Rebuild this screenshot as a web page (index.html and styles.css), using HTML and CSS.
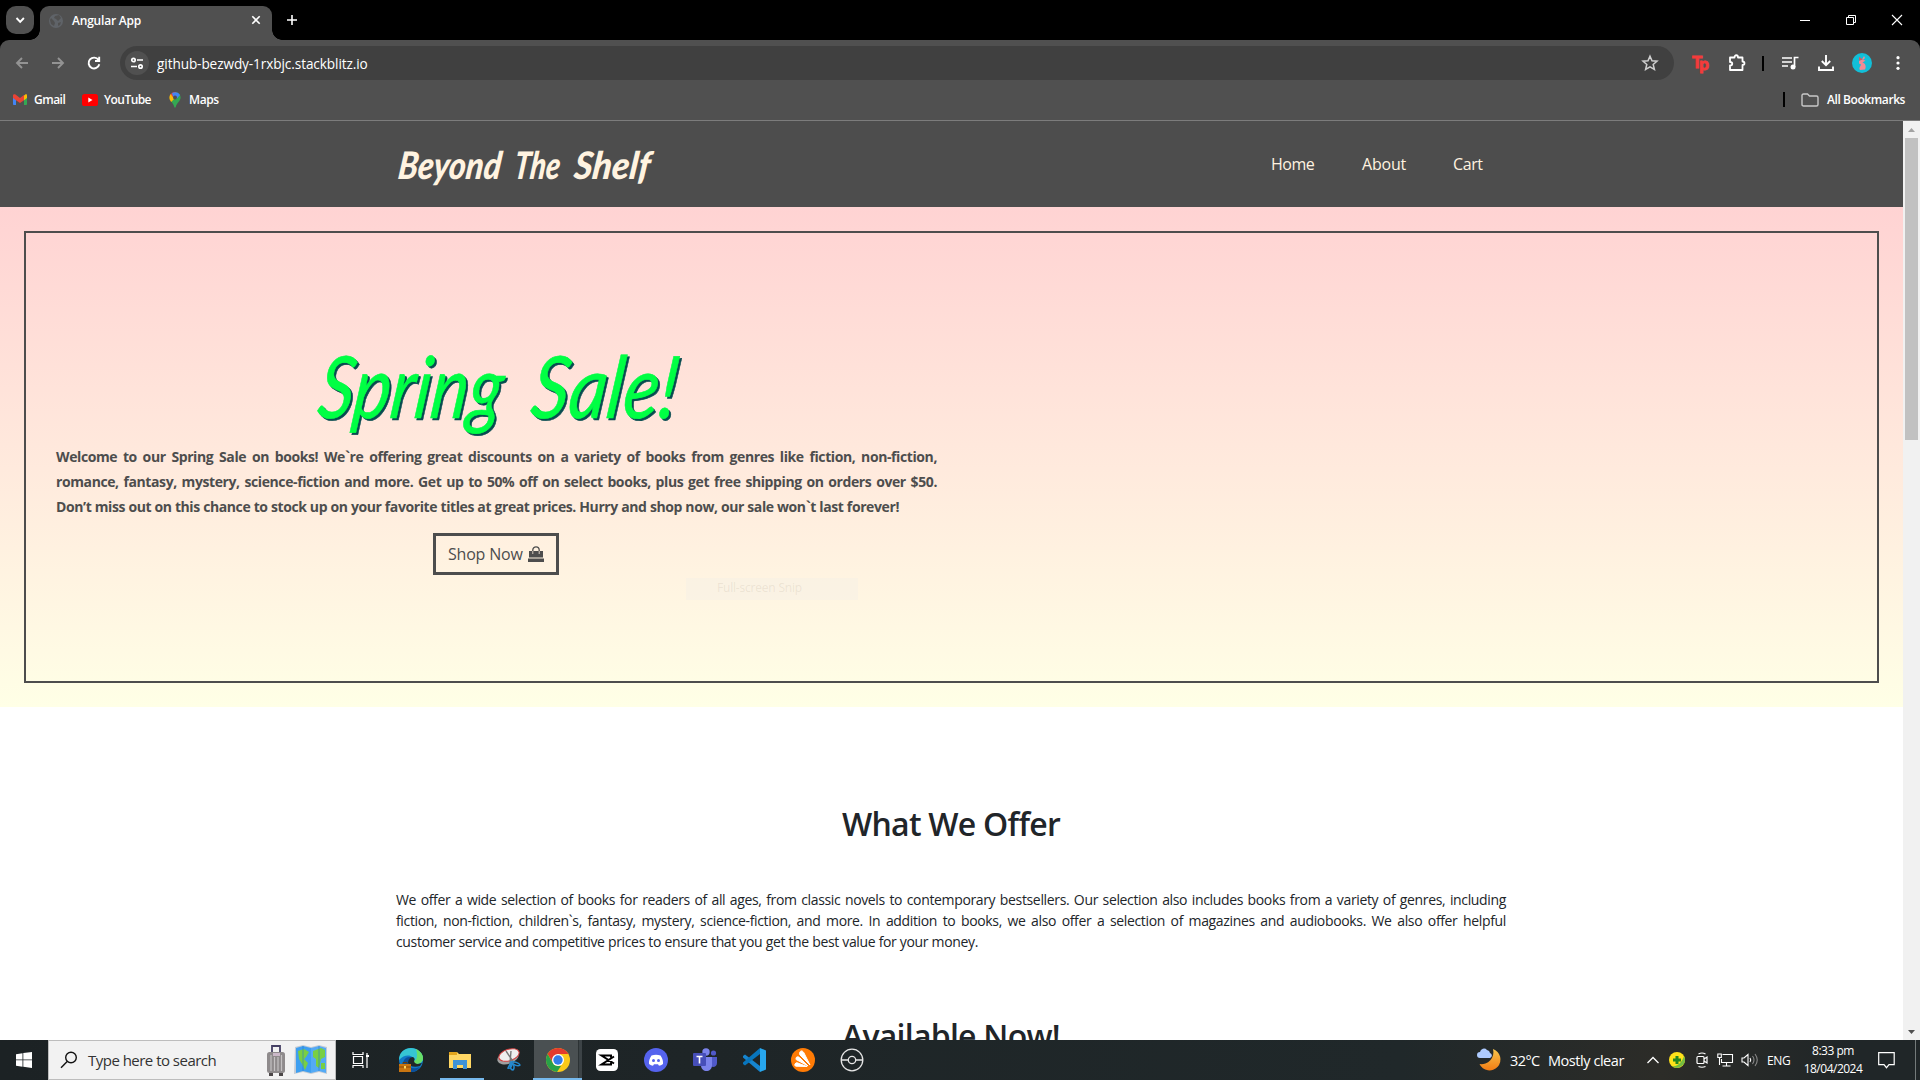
FILE: index.html
```html
<!DOCTYPE html>
<html lang="en">
<head>
<meta charset="utf-8">
<title>Angular App</title>
<link rel="stylesheet" href="styles.css">
</head>
<body>
<div class="screen">
  <header class="tabstrip">
    <div class="tabsearch"><svg width="28" height="28" viewBox="0 0 28 28"><path d="M10.500 12l3.700 3.800 3.700-3.800" fill="none" stroke="#fff" stroke-width="1.900"/></svg></div>
    <div class="tab">
      <svg width="16" height="16" viewBox="0 0 16 16"><circle cx="8" cy="8" r="7" fill="#5f6368"/><path d="M3 5l3 3 1 2-1 3-3-2-1-4zM7 3l4-1 2 3-3 3-2-2-2-1zM10 10l3-1-1 3-2 1z" fill="#505050"/></svg>
      <span class="tab-title">Angular App</span>
      <svg class="tab-close" width="16" height="16" viewBox="0 0 16 16"><path d="M4.300 4.300l7.400 7.400M11.700 4.300l-7.400 7.400" stroke="#fff" stroke-width="1.600"/></svg>
    </div>
    <svg class="newtab" width="16" height="16" viewBox="0 0 16 16"><path d="M8 3v10M3 8h10" stroke="#fff" stroke-width="1.600"/></svg>
    <div class="winctl">
      <svg width="46" height="40" viewBox="0 0 46 40"><path d="M18 20.500h10" stroke="#fff"/></svg>
      <svg width="46" height="40" viewBox="0 0 46 40"><path d="M18.500 17.500h7v7h-7zM20.500 17v-1.500h7v7h-2" fill="none" stroke="#fff"/></svg>
      <svg width="46" height="40" viewBox="0 0 46 40"><path d="M18 15l10 10M28 15l-10 10" stroke="#fff" stroke-width="1.100"/></svg>
    </div>
  </header>

  <div class="toolbar-back">
  <div class="toolbar">
    <svg class="nav-icon dim" viewBox="0 0 16 16"><path d="M14 8H3M8 3L3 8l5 5"/></svg>
    <svg class="nav-icon dim" viewBox="0 0 16 16"><path d="M2 8h11M8 3l5 5-5 5"/></svg>
    <svg class="nav-icon" viewBox="0 0 16 16"><path d="M12.500 5A5.400 5.400 0 1 0 13.300 9.300M13.200 1.800V6H9"/></svg>
    <div class="omnibox">
      <div class="siteinfo"><svg width="14" height="14" viewBox="0 0 14 14" fill="none" stroke="#fff" stroke-width="1.700"><circle cx="3.500" cy="4" r="1.700"/><path d="M7 4h6M1 10.500h6"/><circle cx="10.500" cy="10.500" r="1.700"/></svg></div>
      <span class="url">github-bezwdy-1rxbjc.stackblitz.io</span>
      <svg class="star" width="18" height="18" viewBox="0 0 18 18"><path d="M9 2.200l2 4.600 5 .4-3.800 3.300 1.200 4.900L9 12.800l-4.400 2.600 1.200-4.900L2 7.200l5-.4z" fill="none" stroke="#d0d0d0" stroke-width="1.500"/></svg>
    </div>
    <div class="actions">
      <span class="tp"><b>T</b><b>p</b></span>
      <svg width="20" height="20" viewBox="0 0 20 20"><path d="M3 4.500h4.500c0-3 3.500-3 3.500 0h4.500v4c2.600 0 2.600 3.500 0 3.500v5H3v-4.500c3 0 3-3.500 0-3.500z" fill="none" stroke="#fff" stroke-width="1.800" stroke-linejoin="round"/></svg>
      <i class="sep"></i>
      <svg width="18" height="18" viewBox="0 0 18 18"><path d="M1 4h10M1 8h10M1 12h6M13.500 13V3.500h4" fill="none" stroke="#fff" stroke-width="1.700"/><circle cx="12" cy="13" r="2.500" fill="#fff"/></svg>
      <svg width="18" height="18" viewBox="0 0 18 18"><path d="M9 1v10M4.800 7L9 11.200 13.200 7M2 12.500V16h14v-3.500" fill="none" stroke="#fff" stroke-width="1.900"/></svg>
      <svg width="20" height="20" viewBox="0 0 20 20"><circle cx="10" cy="10" r="10" fill="#12bfd8"/><path d="M7 8l3-1.500L12 3l1 2-2 2 2.500.5-3 2c3 1 4 4 2.500 7l-5 .5c-1.500-2 .5-3.500 1-5.500l-2-1z" fill="#f28b94"/><path d="M7 4l4 2.500-4 1z" fill="#d95760"/></svg>
      <svg width="16" height="16" viewBox="0 0 16 16" fill="#fff"><circle cx="8" cy="2.700" r="1.600"/><circle cx="8" cy="8" r="1.600"/><circle cx="8" cy="13.300" r="1.600"/></svg>
    </div>
  </div>
  </div>

  <div class="bookmarks">
    <svg width="14" height="11" viewBox="0 0 14 11"><path d="M0 2v8.200c0 .5.300.8.800.8H3V4z" fill="#4285f4"/><path d="M14 2v8.200c0 .5-.3.800-.8.800H11V4z" fill="#34a853"/><path d="M11 1.500L13 0c.6.300 1 .8 1 1.500V4l-3 2.300z" fill="#fbbc04"/><path d="M0 4V1.500C0 .3 1.500-.2 2.500.6L7 4l4-3v5.300L7 9 3 6.300z" fill="#ea4335"/></svg>
    <span class="bm bm-gmail">Gmail</span>
    <svg width="16" height="12" viewBox="0 0 16 12"><rect width="16" height="12" rx="2.600" fill="#f00"/><path d="M6.300 3.500v5L10.500 6z" fill="#fff"/></svg>
    <span class="bm bm-yt">YouTube</span>
    <svg width="12" height="16" viewBox="0 0 12 16"><path d="M6 0a5.600 5.600 0 0 1 5.600 5.600C11.600 9 7.800 11 6.700 15c-.2 1-1.200 1-1.400 0C4.800 12.700 3.500 11 2.200 9.500z" fill="#34a853"/><path d="M2 1.700L6 6l-3.800 4C1 8.500.4 7.200.4 5.600.4 4 1 2.700 2 1.700z" fill="#fbbc04"/><path d="M1.800 2A5.600 5.600 0 0 1 7.500.2L3.500 5z" fill="#ea4335"/><path d="M3 1C5 0 9-.5 11 3L7.500 7 4 4.500z" fill="#4285f4"/><circle cx="6" cy="5.600" r="2" fill="#505050"/></svg>
    <span class="bm bm-maps">Maps</span>
    <i class="sep"></i>
    <svg class="folder" width="18" height="14" viewBox="0 0 18 14"><path d="M1 2.500C1 1.500 1.500 1 2.500 1h4l2 2h7c1 0 1.500.5 1.500 1.500v7c0 1-.5 1.500-1.500 1.500h-13C1.500 13 1 12.500 1 11.500z" fill="none" stroke="#c7c7c7" stroke-width="1.400"/></svg>
    <span class="bm bm-all">All Bookmarks</span>
  </div>

  <div class="viewport">
    <main class="page">
      <nav class="navbar">
        <svg class="brand" width="270" height="86">
          <g transform="translate(0 58) skewX(-7)">
            <text x="5" y="0" textLength="103" lengthAdjust="spacingAndGlyphs">Beyond</text>
            <text x="121" y="0" textLength="46" lengthAdjust="spacingAndGlyphs">The</text>
            <text x="181" y="0" textLength="76" lengthAdjust="spacingAndGlyphs">Shelf</text>
          </g>
        </svg>
        <a class="link home">Home</a><a class="link about">About</a><a class="link cart">Cart</a>
      </nav>
      <section class="hero">
        <div class="frame">
          <div class="promo">
            <svg class="sale" width="390" height="104">
              <g class="shade" transform="translate(2 80) skewX(-7)">
                <text x="10" y="0" textLength="184" lengthAdjust="spacingAndGlyphs">Spring</text>
                <text x="223" y="0" textLength="146" lengthAdjust="spacingAndGlyphs">Sale!</text>
              </g>
              <g transform="translate(0 78) skewX(-7)">
                <text x="10" y="0" textLength="184" lengthAdjust="spacingAndGlyphs">Spring</text>
                <text x="223" y="0" textLength="146" lengthAdjust="spacingAndGlyphs">Sale!</text>
              </g>
            </svg>
            <div class="lead">
              <p>Welcome to our Spring Sale on books! We`re offering great discounts on a variety of books from genres like fiction, non-fiction,</p>
              <p>romance, fantasy, mystery, science-fiction and more. Get up to 50% off on select books, plus get free shipping on orders over $50.</p>
              <p class="lead-last">Don’t miss out on this chance to stock up on your favorite titles at great prices. Hurry and shop now, our sale won`t last forever!</p>
            </div>
            <a class="shop"><span>Shop Now</span><svg width="16" height="16" viewBox="0 0 16 16"><path d="M1 5h14v6.500H1zM0 12.500h16V16H0z" fill="#4d4d4d"/><path d="M4.800 7V4a3.200 3.200 0 0 1 6.400 0v3" fill="none" stroke="#4d4d4d" stroke-width="1.300"/><path d="M4.800 5v3M11.200 5v3" stroke="#ffefe0" stroke-width=".8"/></svg></a>
          </div>
          <div class="snip">Full-screen Snip</div>
        </div>
      </section>
      <section class="offer">
        <h2 class="h-offer">What We Offer</h2>
        <div class="copy">
          <p>We offer a wide selection of books for readers of all ages, from classic novels to contemporary bestsellers. Our selection also includes books from a variety of genres, including</p>
          <p>fiction, non-fiction, children`s, fantasy, mystery, science-fiction, and more. In addition to books, we also offer a selection of magazines and audiobooks. We also offer helpful</p>
          <p class="copy-last">customer service and competitive prices to ensure that you get the best value for your money.</p>
        </div>
        <h2 class="h-avail">Available Now!</h2>
      </section>
    </main>
    <div class="scrollbar">
      <svg width="17" height="17" viewBox="0 0 17 17"><path d="M5 11h7L8.500 7z" fill="#a3a3a3"/></svg>
      <i class="thumb"></i>
      <svg width="17" height="17" viewBox="0 0 17 17"><path d="M5 7h7l-3.500 4z" fill="#505050"/></svg>
    </div>
  </div>

  <footer class="taskbar">
    <div class="start"><svg width="16" height="16" viewBox="0 0 16 16" fill="#fff"><path d="M0 2.200l6.500-1v6.300H0zM7.300 1.100L16 0v7.500H7.300zM0 8.300h6.500v6.400L0 13.800zM7.300 8.300H16V16l-8.700-1.200z"/></svg></div>
    <div class="search">
      <svg width="18" height="18" viewBox="0 0 18 18" fill="none" stroke="#111" stroke-width="1.400"><circle cx="11" cy="6.500" r="5.300"/><path d="M7.200 10.400L1 16.800"/></svg>
      <span>Type here to search</span>
      <svg class="case" width="18" height="32" viewBox="0 0 18 32"><path d="M5 9V2h8v7" fill="none" stroke="#454064" stroke-width="1.800"/><rect x="0" y="8" width="18" height="21" rx="2.500" fill="#8f8b8c"/><path d="M4 11v16M7.500 13v14M11 13v14M14.500 11v16" stroke="#c4c1c2" stroke-width="1.200"/><path d="M6 9h7v3H6z" fill="#cbb8c8"/><path d="M2 29h4v3H2zM12 29h4v3h-4z" fill="#4c4748"/></svg>
      <svg class="map" width="34" height="30" viewBox="0 0 34 30"><path d="M1 2l8-2 8 2 8-2 8 2v27l-8-2-8 2-8-2-9 2z" fill="#c3cbd5"/><path d="M2 3l7-2 8 2v25l-8-2-7 2z" fill="#3e9ff0"/><path d="M17 3l8-2 7 2v25l-7-2-8 2z" fill="#54aaf5"/><path d="M4 6l6-2 5 3-3 5-2 2 4 4-3 7-3-6-3-5zM19 6l8-3 4 2v7l-4 2-2 9-3-2v-7l-3-2zM27 18h4v6h-4z" fill="#79cf43"/><path d="M9 1v25M25 1v25" stroke="#287dcd" opacity=".6"/></svg>
    </div>
    <div class="apps">
      <div class="app"><svg width="18" height="18" viewBox="0 0 18 18" fill="none" stroke="#fff" stroke-width="1.200"><path d="M1 1v2.500h10V1M1 17v-2.500h10V17M1.500 5.500h9v7h-9zM15 2v2M15 6v11"/><path d="M14 5h3" stroke-width="2"/></svg></div>
      <div class="app edge"><svg width="24" height="24" viewBox="0 0 24 24"><circle cx="12" cy="12" r="12" fill="#1079c7"/><path d="M0 12C0 4 6 0 12 0s12 5 12 10c0 4-3 6-7 6-2 0-4-1-2-3C16 8 7 4 0 12z" fill="#36c6d3"/><path d="M17 1c4 2 7 5 7 9 0 4-3 6-7 6-2 0-4-1-2-3 3 0 4-6 2-12z" fill="#68df67"/><path d="M9 17c0-4 1-6 4-7-4-3-9 1-9 6s3 8 8 8c4 0 7-2 9-5-5 2-11 2-12-2z" fill="#0b4f9b"/><path d="M15 13c1-1 1-3-1-4-3 0-5 3-5 6 1 3 6 5 12 3l2-3c-3 1-7 2-8-2z" fill="#20282a"/><rect x="0" y="16" width="12" height="8" fill="#c87511"/><path d="M4 16v-1.500h4V16" fill="none" stroke="#6b3e06"/><path d="M0 19h12" stroke="#8c4b05"/><rect x="5" y="18" width="2" height="2.500" fill="#ffd45c"/></svg></div>
      <div class="app open"><svg width="22" height="20" viewBox="0 0 22 20"><path d="M0 2h8l2 2h12v14H0z" fill="#ffd764"/><path d="M0 2h8v3H0z" fill="#e3a51c"/><path d="M4 19v-9h14v9h-4v-4H8v4z" fill="#3f92d7"/></svg></div>
      <div class="app"><svg width="24" height="24" viewBox="0 0 24 24"><ellipse cx="11" cy="9.500" rx="11" ry="6.300" transform="rotate(-18 11 9.500)" fill="#a0a0a0"/><ellipse cx="12" cy="7" rx="10.500" ry="5.700" transform="rotate(-18 12 7)" fill="#eee" stroke="#d33f3f"/><path d="M9 3l8 12M14 3l-1 12" stroke="#777" stroke-width="1.400"/><path d="M14 14l-3 6c3 1 5-3 3-6 3-1 8 1 9 3-2 2-6 0-9-3 3 2 4 6 2 8-3 0-3-5-2-8" fill="none" stroke="#2389cf" stroke-width="1.500"/></svg></div>
      <div class="app active"><svg width="24" height="24" viewBox="0 0 24 24"><circle cx="12" cy="12" r="12" fill="#fbc91a"/><path d="M1.600 6A12 12 0 0 1 22.400 6H12l-5 9z" fill="#e33b2e"/><path d="M1.600 6l5.200 9A6 6 0 0 0 12 18h3l-4 6A12 12 0 0 1 1.600 6z" fill="#28a148"/><circle cx="12" cy="12" r="6" fill="#fff"/><circle cx="12" cy="12" r="4.700" fill="#327de8"/></svg></div>
      <div class="app"><svg width="22" height="22" viewBox="0 0 22 22"><rect width="22" height="22" rx="4.500" fill="#fff"/><path d="M18 7.500L5.500 15.500H15V13.500M18 14.500L5.500 6.500H15V8.500" fill="none" stroke="#000" stroke-width="2"/></svg></div>
      <div class="app"><svg width="24" height="24" viewBox="0 0 24 24"><circle cx="12" cy="12" r="12" fill="#5563ee"/><path d="M7.500 7.500Q12 6 16.500 7.500 19.500 12 19 16q-2 1.700-4 1.700l-1-1.500h-4l-1 1.500q-2 0-4-1.700-.5-4 2.500-8.500z" fill="#fff"/><circle cx="9.500" cy="12.600" r="1.500" fill="#5563ee"/><circle cx="14.500" cy="12.600" r="1.500" fill="#5563ee"/></svg></div>
      <div class="app"><svg width="24" height="24" viewBox="0 0 24 24"><circle cx="13" cy="4" r="3.700" fill="#7b83eb"/><circle cx="20.500" cy="5" r="2.600" fill="#5059c9"/><path d="M17 9h7v6c0 5-7 5-7 1z" fill="#5059c9"/><path d="M8 9h11v8c0 8-11 8-11 0z" fill="#7b83eb"/><rect y="5" width="13" height="13" rx="1" fill="#464eb8"/><path d="M3.500 8.500h6M6.500 8.500v7" stroke="#fff" stroke-width="1.600"/></svg></div>
      <div class="app"><svg width="24" height="24" viewBox="0 0 24 24"><path d="M1 8l2-1.500L18 18v6L1 9.500z" fill="#1685cf"/><path d="M1 16l2 1.500L18 6V0L1 14.500z" fill="#0875bd"/><path d="M18 0l6 2.500v19L18 24z" fill="#27a7ef"/></svg></div>
      <div class="app"><svg width="24" height="24" viewBox="0 0 24 24"><circle cx="12" cy="12" r="12" fill="#ff7b05"/><path d="M9 4c1-2 3-1 4 1l6 12L9 7c-.7-1-.7-2 0-3zM5 10c1-2 3-1 4 0l8 8L6 12c-1 0-1-1-1-2zM4 16c1-2 3-1 4-.5l8 3-11-.3c-1 0-1.500-1-1-2.200z" fill="#fff" stroke="#fff"/></svg></div>
      <div class="app"><svg width="24" height="24" viewBox="0 0 24 24" fill="none" stroke="#e6e6e6" stroke-width="1.300"><circle cx="12" cy="12" r="10.800"/><circle cx="12" cy="12" r="3.700"/><path d="M1 12h7.300M15.700 12H23"/></svg></div>
    </div>
    <div class="tray">
      <svg class="moon" width="24" height="24" viewBox="0 0 24 24"><defs><linearGradient id="m" x2="0" y2="1"><stop stop-color="#f5c54d"/><stop offset="1" stop-color="#f27c13"/></linearGradient></defs><path d="M16 1a11 11 0 1 1-13.500 15A12 12 0 0 0 16 1z" fill="url(#m)"/><path d="M3 10a3 3 0 0 1 0-6 4 4 0 0 1 7-2 3.500 3.500 0 0 1 3 3 2.600 2.600 0 0 1 0 5z" fill="#aecbff"/></svg>
      <span class="temp">32°C</span><span class="sky">Mostly clear</span>
      <svg class="caret" width="12" height="8" viewBox="0 0 12 8"><path d="M.5 7L6 1.500 11.500 7" fill="none" stroke="#fff" stroke-width="1.300"/></svg>
      <svg class="plus" width="16" height="16" viewBox="0 0 16 16"><circle cx="8" cy="8" r="8" fill="#ffe21a"/><path d="M15 4a8 8 0 0 1-12 10c6 1 10-4 12-10z" fill="#75bd3f"/><path d="M8 4v8M4 8h8" stroke="#24861f" stroke-width="3"/></svg>
      <svg class="meet" width="12" height="16" viewBox="0 0 12 16" fill="none" stroke="#fff" stroke-width="1.200"><rect x="1" y="4.500" width="7" height="7" rx="1"/><path d="M8 7l3-2v6L8 9M2.500 2Q6 0 9.500 2M2.500 14.500q3.500 1.500 7 0"/></svg>
      <svg class="net" width="16" height="14" viewBox="0 0 16 14" fill="none" stroke="#fff" stroke-width="1.100"><path d="M5.500 1.500h10v8h-11V6M9.500 9.500v3.500M5.500 13h8M.8 1h3.500v3.500H.8zM2.500 4.500V12"/></svg>
      <svg class="vol" width="17" height="14" viewBox="0 0 17 14" fill="none" stroke="#fff" stroke-width="1.100"><path d="M1 5h2l4-3.500v11L3 9H1zM9 5q1.500 2 0 4"/><path d="M11.500 3q3 4 0 8M14 1q4.500 6 0 12" stroke="#888"/></svg>
      <span class="eng">ENG</span>
      <div class="clock"><span class="time">8:33 pm</span><span class="date">18/04/2024</span></div>
      <svg class="note" width="17" height="17" viewBox="0 0 17 17"><path d="M.7.700h15.500v12H11l-2.500 3-2.500-3H.7z" fill="none" stroke="#fff" stroke-width="1.200"/></svg>
      <i class="desk"></i>
    </div>
  </footer>
</div>
</body>
</html>
```
FILE: styles.css
```css
* { box-sizing: border-box; }
body { margin: 0; font-family: "Open Sans", "Noto Sans", sans-serif; }
p, h2 { margin: 0; }
svg { display: block; flex: none; overflow: visible; }
.screen { width: 1920px; height: 1080px; overflow: hidden; display: flex; flex-direction: column; background: #fff; }

.tabstrip { height: 40px; flex: none; background: #000; display: flex; align-items: flex-start; }
.tabsearch { width: 28px; height: 28px; margin: 6px 0 0 6px; border-radius: 10px; background: #505050; }
.tab { position: relative; width: 232px; height: 34px; margin: 6px 0 0 6px; padding: 0 8px 5px; border-radius: 9px 9px 0 0; background: #505050; display: flex; align-items: center; }
.tab::before, .tab::after { content: ""; position: absolute; bottom: 0; width: 10px; height: 10px; }
.tab::before { left: -10px; background: radial-gradient(circle at 0 0, transparent 9.5px, #505050 10px); }
.tab::after { right: -10px; background: radial-gradient(circle at 100% 0, transparent 9.5px, #505050 10px); }
.tab-title { margin-left: 8px; width: 171px; color: #fff; font-size: 12px; font-weight: 600; letter-spacing: -.2px; white-space: nowrap; }
.tab-close { margin-left: 5px; margin-bottom: 1px; }
.newtab { margin: 12px 0 0 12px; }
.winctl { display: flex; margin-left: auto; }

.toolbar-back { flex: none; background: #000; }
.toolbar { height: 46px; background: #505050; border-radius: 9px 9px 0 0; display: flex; align-items: center; padding-left: 14px; }
.nav-icon { width: 16px; height: 16px; margin-right: 20px; fill: none; stroke: #fff; stroke-width: 1.9; }
.dim { stroke: #939393; }
.omnibox { width: 1554px; height: 34px; margin-left: -2px; border-radius: 17px; background: #404040; display: flex; align-items: center; padding: 0 15px 0 5px; }
.siteinfo { width: 24px; height: 24px; border-radius: 50%; background: #505050; display: flex; align-items: center; justify-content: center; }
.url { margin-left: 8px; color: #fff; font-size: 13.6px; letter-spacing: -.09px; }
.star { margin-left: auto; }
.actions { display: flex; align-items: center; flex: 1; padding-left: 18px; }
.tp { display: flex; width: 18px; margin-right: 17px; color: #f43b3b; font: 900 17px/18px "Lato", sans-serif; -webkit-text-stroke: .8px #f43b3b; }
.tp b:first-child { position: relative; top: -1px; }
.tp b + b { position: relative; top: 1px; left: -3px; }
.sep { width: 2px; height: 15px; background: #000; }
.actions .sep { margin: 0 17px 0 15px; }
.actions svg:nth-of-type(2) { margin-right: 18px; }
.actions svg:nth-of-type(3) { margin-right: 17px; }
.actions svg:nth-of-type(4) { margin-right: 18px; }

.bookmarks { height: 35px; flex: none; background: #505050; border-bottom: 1px solid #7c7c7c; display: flex; align-items: center; padding: 0 14px 7px 13px; }
.bm { color: #fff; font-size: 12px; font-weight: 600; white-space: nowrap; }
.bm-gmail { width: 48px; margin-left: 7px; letter-spacing: -.5px; }
.bm-yt { width: 65px; margin-left: 6px; letter-spacing: -.55px; }
.bm-maps { margin-left: 8px; letter-spacing: -.4px; }
.bookmarks .sep { margin-left: auto; }
.folder { margin: 0 8px 0 16px; }
.bm-all { width: 79px; letter-spacing: -.42px; }

.viewport { height: 919px; flex: none; display: flex; overflow: hidden; }
.page { width: 1903px; color: #212529; }
.navbar { height: 86px; background: #4d4d4d; display: flex; align-items: center; padding-left: 392px; }
.brand text { font: italic 900 38px "Lato", cursive; fill: #fff3e0; }
.link { color: #fff3e0; font-size: 16px; }
.home { width: 91px; margin-left: 609px; letter-spacing: -.5px; }
.about { width: 91px; letter-spacing: -.2px; }
.cart { letter-spacing: -.4px; }
.hero { height: 500px; padding: 24px; background: linear-gradient(#ffd3d3, #ffffe6); }
.frame { position: relative; height: 452px; border: 2px solid #4d4d4d; padding-left: 30px; }
.promo { width: 881px; height: 448px; padding-top: 107px; display: flex; flex-direction: column; }
.sale { margin-left: 250px; }
.sale text { font: italic 400 86px "Lato", cursive; fill: #00ff44; stroke: #00ff44; stroke-width: .6px; }
.sale .shade text { fill: #084c50; stroke: #084c50; }
.lead { color: #4d4d4d; font-size: 14px; font-weight: 700; line-height: 25.2px; letter-spacing: -.4px; }
.lead p, .copy p { text-align: justify; text-align-last: justify; white-space: normal; }
.lead .lead-last { width: 843px; }
.shop { width: 126px; height: 42px; margin: 13px 0 0 377px; border: 3px solid #4d4d4d; color: #4d4d4d; font-size: 16px; font-weight: 500; display: flex; align-items: center; padding-left: 12px; white-space: nowrap; }
.shop span { width: 80px; letter-spacing: -.2px; }
.snip { position: absolute; left: 660px; top: 345px; width: 172px; height: 22px; padding-left: 31px; background: rgba(235,235,235,.25); color: rgba(150,130,110,.15); font-size: 12px; line-height: 20px; letter-spacing: -.2px; }
.offer { display: flex; flex-direction: column; padding: 96px 397px 0 396px; }
h2 { width: 218px; align-self: center; font-size: 32px; font-weight: 600; line-height: 42px; white-space: nowrap; letter-spacing: -.75px; }
.copy { margin-top: 44px; font-size: 14px; line-height: 21px; letter-spacing: -.35px; }
.copy .copy-last { width: 582px; }
.h-avail { margin-top: 63px; }

.scrollbar { width: 17px; background: #f1f1f1; display: flex; flex-direction: column; }
.thumb { width: 13px; height: 302px; margin: 0 2px auto; background: #c1c1c1; }

.taskbar { height: 40px; flex: none; background: linear-gradient(90deg, #1c2224 0, #20282a 1400px, #2c2c28 1660px, #202628 1850px); display: flex; color: #fff; }
.start { width: 48px; display: flex; align-items: center; justify-content: center; }
.search { width: 288px; background: #f2f2f2; border: 1px solid #bdbdbd; color: #333; display: flex; align-items: center; padding-left: 11px; font-size: 15px; }
.search span { margin-left: 10px; width: 179px; letter-spacing: -.52px; white-space: nowrap; }
.map { margin-left: 9px; }
.apps { display: flex; }
.app { width: 49px; height: 40px; display: flex; align-items: center; justify-content: center; }
.edge { margin-left: 1px; }
.open { background: linear-gradient(#76b9ed, #76b9ed) 5px 38px / 44px 2px no-repeat; }
.active { background: linear-gradient(90deg, transparent 1px, #4a5052 1px, #4a5052 45px, #2c3234 45px, #2c3234 46px, #3c4346 46px); box-shadow: inset 0 -2px #76b9ed; }
.tray { margin-left: auto; width: 443px; display: flex; align-items: center; white-space: nowrap; }
.temp { width: 38px; margin-left: 9px; font-size: 14.5px; letter-spacing: -.6px; }
.sky { width: 99px; font-size: 14.5px; letter-spacing: -.45px; }
.plus { margin-left: 10px; }
.meet { margin-left: 11px; }
.net { margin-left: 9px; }
.vol { margin-left: 8px; }
.eng { width: 36px; margin-left: 9px; font-size: 12px; letter-spacing: -.3px; }
.clock { width: 60px; display: flex; flex-direction: column; align-items: center; font-size: 12px; line-height: 18px; letter-spacing: -.5px; }
.note { margin-left: 15px; }
.desk { width: 1px; height: 40px; margin-left: auto; margin-right: 4px; background: #747a7a; }
```
